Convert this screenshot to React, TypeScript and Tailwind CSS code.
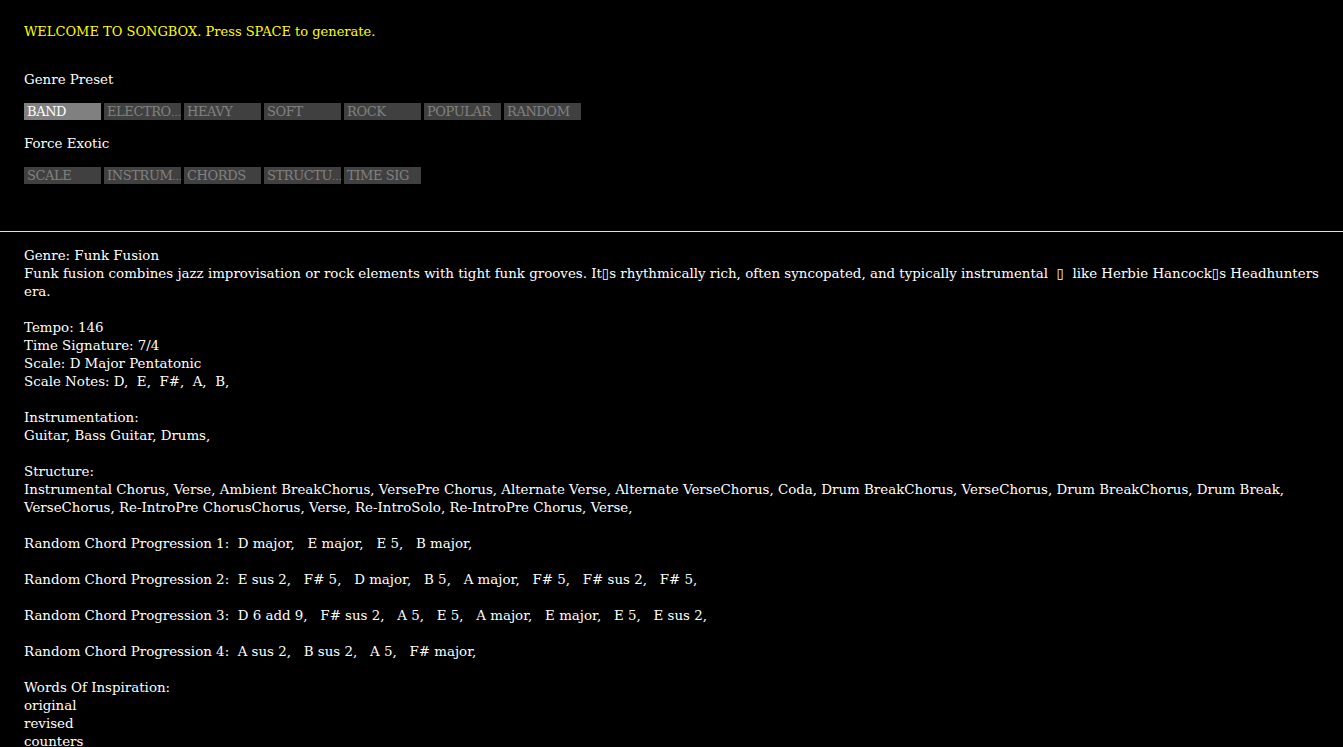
import React from 'react'

// labels as they show in the 77px buttons
const genres = ['BAND', 'ELECTRO…', 'HEAVY', 'SOFT', 'ROCK', 'POPULAR', 'RANDOM']
const exotic = ['SCALE', 'INSTRUM…', 'CHORDS', 'STRUCTU…', 'TIME SIG']

const progressions = [
  'D major,   E major,   E 5,   B major,',
  'E sus 2,   F# 5,   D major,   B 5,   A major,   F# 5,   F# sus 2,   F# 5,',
  'D 6 add 9,   F# sus 2,   A 5,   E 5,   A major,   E major,   E 5,   E sus 2,',
  'A sus 2,   B sus 2,   A 5,   F# major,',
]

function Toggle({ label, active }: { label: string; active?: boolean }) {
  const cut = label.endsWith('…')
  const text = cut ? label.slice(0, -1) : label
  return (
    <div
      className={`w-[77px] h-[17px] pl-[3px] text-[13px] tracking-[-0.4px] leading-[18px] overflow-hidden whitespace-nowrap ${
        active ? 'bg-[#808080] text-white' : 'bg-[#404040] text-[#808080]'
      }`}
    >
      {text}
      {cut && <span className="text-[10px] tracking-[-1px]">…</span>}
    </div>
  )
}

export default function App() {
  return (
    <div className="min-h-screen bg-black text-white font-['DejaVu_Serif',serif] text-[13.4px] leading-[18px] overflow-hidden">
      <div className="pl-[24px] pt-[23px] pb-[47px]">
        <div className="text-[#ffff00] text-[13px]">WELCOME TO SONGBOX. Press SPACE to generate.</div>

        <div className="mt-[30px]">Genre Preset</div>
        <div className="mt-[14px] flex gap-[3px]">
          {genres.map((g, i) => (
            <Toggle key={g} label={g} active={i === 0} />
          ))}
        </div>

        <div className="mt-[15px]">Force Exotic</div>
        <div className="mt-[14px] flex gap-[3px]">
          {exotic.map((g) => (
            <Toggle key={g} label={g} />
          ))}
        </div>
      </div>

      <div className="h-px bg-[#e0e0e0]" />

      <div className="pl-[24px] pt-[15px] whitespace-pre-wrap">
        <div>Genre: Funk Fusion</div>
        <div>
          Funk fusion combines jazz improvisation or rock elements with tight funk grooves. It▯s rhythmically rich, often syncopated, and typically instrumental  ▯  like Herbie Hancock▯s Headhunters era.
        </div>
        <br />
        <div>Tempo: 146</div>
        <div>Time Signature: 7/4</div>
        <div>Scale: D Major Pentatonic</div>
        <div>Scale Notes: D,  E,  F#,  A,  B,</div>
        <br />
        <div>Instrumentation:</div>
        <div>Guitar, Bass Guitar, Drums,</div>
        <br />
        <div>Structure:</div>
        <div>
          Instrumental Chorus, Verse, Ambient BreakChorus, VersePre Chorus, Alternate Verse, Alternate VerseChorus, Coda, Drum BreakChorus, VerseChorus, Drum BreakChorus, Drum Break, VerseChorus, Re-IntroPre ChorusChorus, Verse, Re-IntroSolo, Re-IntroPre Chorus, Verse,
        </div>
        {progressions.map((p, i) => (
          <React.Fragment key={i}>
            <br />
            <div>
              Random Chord Progression {i + 1}:  {p}
            </div>
          </React.Fragment>
        ))}
        <br />
        <div>Words Of Inspiration:</div>
        <div>original</div>
        <div>revised</div>
        <div>counters</div>
      </div>
    </div>
  )
}
